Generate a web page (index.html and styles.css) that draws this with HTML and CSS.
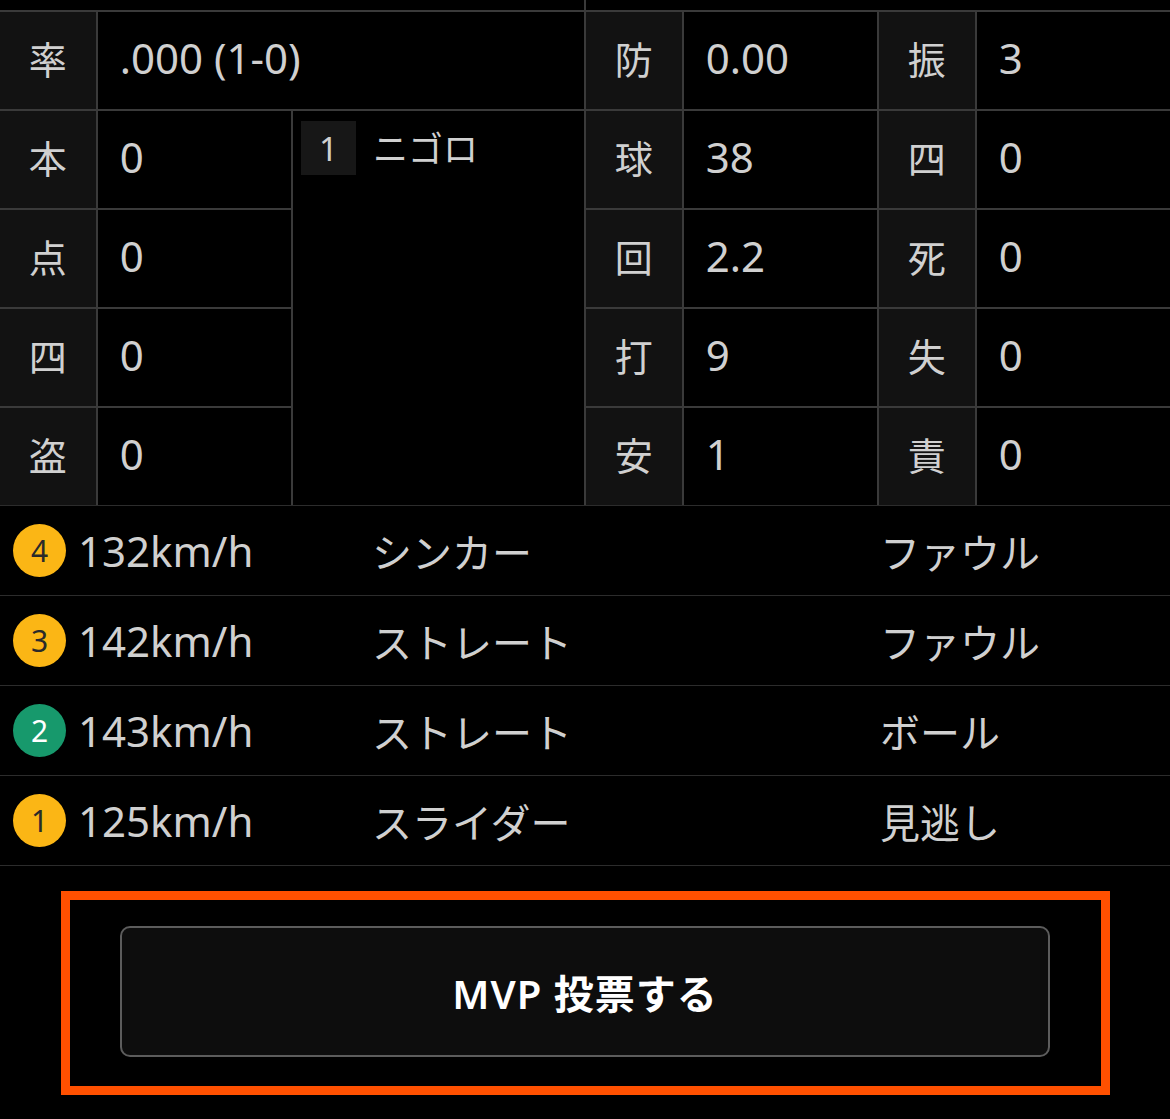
FILE: index.html
```html
<!DOCTYPE html>
<html lang="ja">
<head>
    <meta charset="UTF-8">
    <meta name="viewport" content="width=device-width, initial-scale=1.0">
    <title>試合成績</title>
    <link rel="stylesheet" href="styles.css">
</head>
<body>
    <!-- Batter / pitcher stat grid (12 columns, two halves) -->
    <div class="stats">
        <div class="cell span-6"></div>
        <div class="cell span-6"></div>

        <div class="cell label">率</div>
        <div class="cell value span-5">.000 (1-0)</div>
        <div class="cell label">防</div>
        <div class="cell value span-2">0.00</div>
        <div class="cell label">振</div>
        <div class="cell value span-2">3</div>

        <div class="cell label">本</div>
        <div class="cell value span-2">0</div>
        <div class="cell results">
            <div class="at-bat">
                <span class="at-bat-no">1</span>
                <span class="at-bat-text">ニゴロ</span>
            </div>
        </div>
        <div class="cell label">球</div>
        <div class="cell value span-2">38</div>
        <div class="cell label">四</div>
        <div class="cell value span-2">0</div>

        <div class="cell label">点</div>
        <div class="cell value span-2">0</div>
        <div class="cell label">回</div>
        <div class="cell value span-2">2.2</div>
        <div class="cell label">死</div>
        <div class="cell value span-2">0</div>

        <div class="cell label">四</div>
        <div class="cell value span-2">0</div>
        <div class="cell label">打</div>
        <div class="cell value span-2">9</div>
        <div class="cell label">失</div>
        <div class="cell value span-2">0</div>

        <div class="cell label">盗</div>
        <div class="cell value span-2">0</div>
        <div class="cell label">安</div>
        <div class="cell value span-2">1</div>
        <div class="cell label">責</div>
        <div class="cell value span-2">0</div>
    </div>

    <!-- Pitch by pitch log, latest first -->
    <ul class="pitches">
        <li class="pitch">
            <span class="pitch-speed"><span class="pitch-no strike">4</span>132km/h</span>
            <span class="pitch-type">シンカー</span>
            <span class="pitch-result">ファウル</span>
        </li>
        <li class="pitch">
            <span class="pitch-speed"><span class="pitch-no strike">3</span>142km/h</span>
            <span class="pitch-type">ストレート</span>
            <span class="pitch-result">ファウル</span>
        </li>
        <li class="pitch">
            <span class="pitch-speed"><span class="pitch-no ball">2</span>143km/h</span>
            <span class="pitch-type">ストレート</span>
            <span class="pitch-result">ボール</span>
        </li>
        <li class="pitch">
            <span class="pitch-speed"><span class="pitch-no strike">1</span>125km/h</span>
            <span class="pitch-type">スライダー</span>
            <span class="pitch-result">見逃し</span>
        </li>
    </ul>

    <div class="vote">
        <button class="vote-button" type="button">MVP 投票する</button>
    </div>
</body>
</html>
```

FILE: styles.css
```css
/* Base */
html, body {
    margin: 0;
    padding: 0;
    background-color: #000;
    color: #d0d0d0;
    font-family: "Noto Sans", "Noto Sans CJK JP", sans-serif;
    overflow: hidden;
}

/* Stat grid */
.stats {
    display: grid;
    grid-template-columns: repeat(12, 1fr);
    grid-template-rows: 10px repeat(5, 97px);
    gap: 2px;
    background-color: #3a3a3a;
}

.cell {
    background-color: #000;
    display: flex;
    align-items: center;
    padding-bottom: 6px;
    box-sizing: border-box;
}

.span-2 { grid-column: span 2; }
.span-5 { grid-column: span 5; }
.span-6 { grid-column: span 6; }

.label {
    background-color: #121212;
    justify-content: center;
    font-size: 38px;
}

.value {
    padding-left: 22px;
    font-size: 42px;
}

.results {
    grid-column: span 3;
    grid-row: span 4;
    align-items: flex-start;
    padding: 10px 8px;
}

.at-bat {
    display: flex;
    align-items: center;
    gap: 17px;
}

.at-bat-no {
    width: 55px;
    height: 54px;
    display: flex;
    align-items: center;
    justify-content: center;
    background-color: #171717;
    font-size: 33px;
}

.at-bat-text {
    font-size: 35px;
    margin-top: -4px;
}

/* Pitch log */
.pitches {
    list-style: none;
    margin: 0;
    padding: 0;
    border-top: 1px solid #2c2c2c;
}

.pitch {
    display: grid;
    grid-template-columns: 359px 508px 1fr;
    align-items: center;
    height: 89px;
    padding-left: 13px;
    border-bottom: 1px solid #2c2c2c;
}

.pitch-speed {
    display: flex;
    align-items: center;
    gap: 12px;
    font-size: 42px;
}

.pitch-no {
    width: 53px;
    height: 53px;
    border-radius: 50%;
    display: flex;
    align-items: center;
    justify-content: center;
    font-size: 30px;
}

.pitch-no.strike {
    background-color: #fbb615;
    color: #2a2a2a;
}

.pitch-no.ball {
    background-color: #17996c;
    color: #fff;
}

.pitch-type,
.pitch-result {
    font-size: 40px;
}

/* Vote button */
.vote {
    margin: 25px 60px 0 61px;
    border: 9px solid #ff5000;
    padding: 26px 51px 29px 50px;
}

.vote-button {
    display: block;
    width: 100%;
    height: 131px;
    background-color: #0d0d0d;
    border: 2px solid #5c5c5c;
    border-radius: 10px;
    color: #fff;
    font-family: "Noto Sans", "Noto Sans CJK JP", sans-serif;
    font-size: 40px;
    font-weight: 600;
    letter-spacing: 1px;
}
```
